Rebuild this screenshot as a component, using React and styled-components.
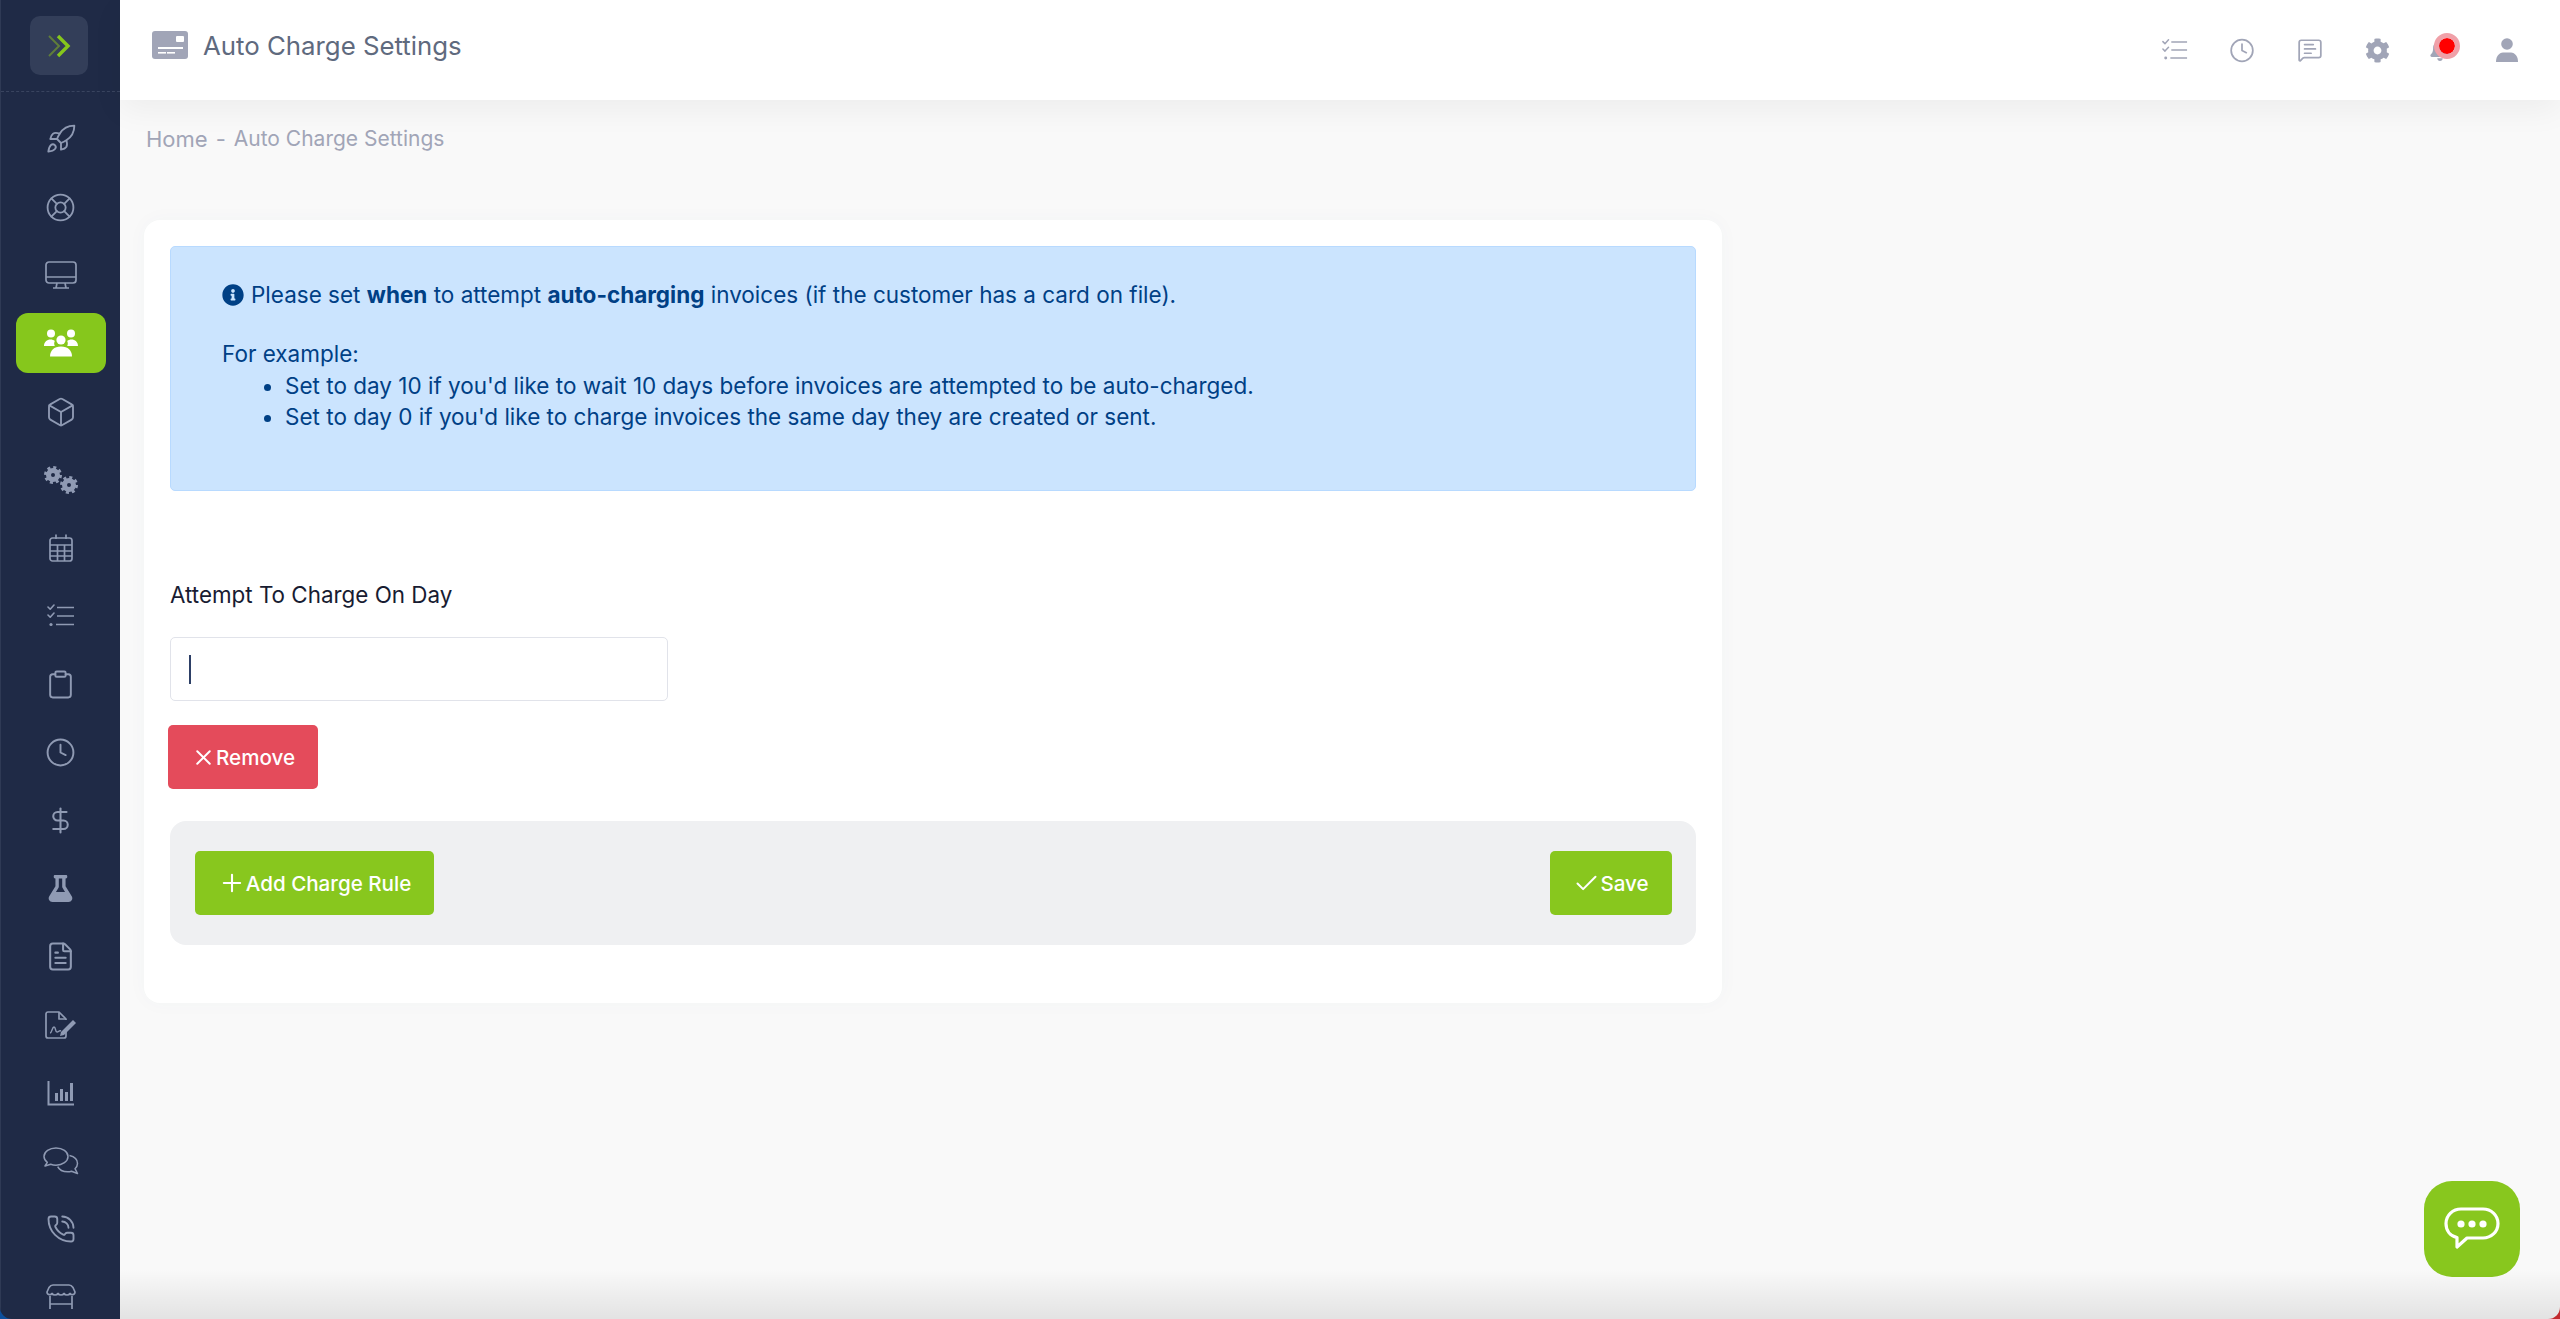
import React from 'react';
import styled, { createGlobalStyle } from 'styled-components';
import {
  Rocket, LifeBuoy, Box, Clipboard, Clock, DollarSign,
  FileText, PhoneCall, MessageSquareText, X, Plus, Check,
} from 'lucide-react';
import { FaFlask, FaCog, FaBell, FaInfoCircle } from 'react-icons/fa';

const GlobalStyle = createGlobalStyle`
  html, body {
    margin: 0;
    padding: 0;
    height: 100%;
    overflow: hidden;
    background: linear-gradient(to right, #0d4f9c 50%, #c22a2e 50%);
  }
  * { box-sizing: border-box; }
  #root { height: 100%; }
`;

const Shell = styled.div`
  display: flex;
  height: 1319px;
  border-radius: 0 0 12px 12px;
  font-family: Inter, "Liberation Sans", sans-serif;
  overflow: hidden;
`;

const Sidebar = styled.aside`
  width: 120px;
  flex-shrink: 0;
  background: #1f2a46;
  border-left: 1px solid #2f3a55;
  display: flex;
  flex-direction: column;
  align-items: center;
  overflow: hidden;
`;

const LogoRow = styled.div`
  width: 100%;
  height: 92px;
  flex-shrink: 0;
  padding: 16px 3px 0 0;
  display: flex;
  justify-content: center;
  border-bottom: 1px dashed #39445f;
`;

const LogoTile = styled.div`
  width: 58px;
  height: 59px;
  border-radius: 10px;
  background: #333e59;
  display: flex;
  align-items: center;
  justify-content: center;
`;

const Nav = styled.nav`
  display: flex;
  flex-direction: column;
  align-items: center;
  padding-top: 17px;
`;

const NavItem = styled.div`
  width: 90px;
  height: 60px;
  margin-bottom: 8.15px;
  border-radius: 12px;
  display: flex;
  align-items: center;
  justify-content: center;
  color: ${({ $active }) => ($active ? '#ffffff' : '#8f9ab3')};
  background: ${({ $active }) => ($active ? '#86c71c' : 'transparent')};
`;

const Main = styled.main`
  flex: 1;
  min-width: 0;
  position: relative;
  background: #f9f9f9;
  display: flex;
  flex-direction: column;
`;

const Header = styled.header`
  height: 100px;
  flex-shrink: 0;
  background: #ffffff;
  box-shadow: 0 10px 30px rgba(0, 0, 0, 0.05);
  padding: 0 40px 0 32px;
  display: flex;
  align-items: center;
  justify-content: space-between;
  position: relative;
`;

const TitleGroup = styled.div`
  display: flex;
  align-items: center;
  gap: 15px;
  margin-bottom: 10px;
`;

const Title = styled.h1`
  margin: 0;
  font-size: 25.8px;
  font-weight: 400;
  color: #5f6a7e;
`;

const HeaderIcons = styled.div`
  display: flex;
  align-items: center;
  gap: 41.5px;
  color: #a1a5b7;
`;

const HeaderIcon = styled.div`
  width: 26px;
  height: 26px;
  display: flex;
  align-items: center;
  justify-content: center;
  position: relative;
`;

const BellIcon = styled(HeaderIcon)`
  margin-left: -5px;
`;

const RedDot = styled.span`
  position: absolute;
  top: -4px;
  left: 7px;
  width: 26px;
  height: 26px;
  border-radius: 50%;
  background: #ff0000;
  border: 5px solid #f0a0a8;
  background-clip: padding-box;
`;

const Breadcrumb = styled.div`
  display: flex;
  gap: 8px;
  padding: 28px 0 0 26px;
  height: 120px;
  flex-shrink: 0;
  align-items: flex-start;
  font-size: 22px;
  color: #a1a5b7;
  line-height: 22px;
`;

const CrumbCurrent = styled.span`
  font-size: 21px;
`;

const Card = styled.section`
  width: 1578px;
  margin-left: 24px;
  background: #ffffff;
  border-radius: 16px;
  box-shadow: 0 0 20px rgba(76, 87, 125, 0.03);
  padding: 26px;
  height: 783px;
`;

const Alert = styled.div`
  height: 245px;
  background: #cbe4fe;
  border: 1px solid #b8daff;
  border-radius: 5px;
  padding: 32px 51px;
  color: #004085;
  font-size: 22.5px;
  line-height: 32px;
`;

const AlertLine = styled.div`
  display: flex;
  align-items: center;
  gap: 7px;
  margin-bottom: 27px;

  b { font-weight: 700; }
`;

const AlertList = styled.ul`
  margin: 0;
  padding-left: 63px;
  line-height: 31px;
`;

const Field = styled.div`
  padding-top: 90px;
`;

const Label = styled.label`
  display: block;
  font-size: 22.4px;
  line-height: 28px;
  color: #181c32;
  margin-bottom: 28px;
`;

const InputBox = styled.div`
  width: 498px;
  height: 64px;
  background: #ffffff;
  border: 1px solid #e1e3ea;
  border-radius: 5px;
  padding: 0 18px;
  display: flex;
  align-items: center;
`;

const Caret = styled.span`
  width: 2px;
  height: 29px;
  background: #2d3f66;
`;

const Button = styled.button`
  height: 64px;
  border: 0;
  padding: 0;
  border-radius: 5px;
  display: inline-flex;
  align-items: center;
  justify-content: center;
  font-family: inherit;
  font-size: 20.6px;
  font-weight: 500;
  color: #ffffff;
  background: ${({ $danger }) => ($danger ? '#e44b5b' : '#88c71e')};
  width: ${({ $width }) => $width}px;
`;

const RemoveButton = styled(Button)`
  display: flex;
  margin: 24px 0 0 -2px;
`;

const ActionBar = styled.div`
  margin-top: 32px;
  height: 124px;
  background: #eff0f2;
  border-radius: 16px;
  padding: 0 24px 0 25px;
  display: flex;
  align-items: center;
  justify-content: space-between;
`;

const ChatFab = styled.div`
  position: absolute;
  right: 40px;
  bottom: 42px;
  width: 96px;
  height: 96px;
  border-radius: 28px;
  background: #88c71e;
  display: flex;
  align-items: center;
  justify-content: center;
`;

const BottomFade = styled.div`
  position: absolute;
  left: 0;
  right: 0;
  bottom: 0;
  height: 50px;
  background: linear-gradient(to bottom, rgba(0, 0, 0, 0), rgba(0, 0, 0, 0.09));
  pointer-events: none;
`;

// hand-drawn icons, the packages don't have these in the same shape
const ChecklistIcon = ({ size = 28 }) => (
  <svg width={size} height={size} viewBox="0 0 28 28" fill="none" stroke="currentColor" strokeWidth="1.6">
    <path d="M1 5l2.2 2.2L7 3M1 13l2.2 2.2L7 11" strokeLinecap="round" strokeLinejoin="round" />
    <path d="M10 5.5h17M10 14h17M9 22.5h18" />
    <circle cx="4" cy="22.5" r="1.6" fill="currentColor" stroke="none" />
  </svg>
);

const GridCalendar = () => (
  <svg width="26" height="30" viewBox="0 0 26 30" fill="none" stroke="currentColor" strokeWidth="1.7">
    <rect x="2" y="5" width="22" height="23" rx="2.5" />
    <path d="M2 12h22M2 18h22M2 23h22M9.500 12v16M16.500 12v16M8 1.500V6M18 1.500V6" />
  </svg>
);

const BarsIcon = () => (
  <svg width="28" height="26" viewBox="0 0 28 26" fill="none">
    <path d="M1.500 1v23.500H27" stroke="currentColor" strokeWidth="2" />
    <rect x="8" y="13" width="3" height="8" fill="currentColor" />
    <rect x="13" y="9" width="3" height="12" fill="currentColor" />
    <rect x="18" y="12" width="3" height="9" fill="currentColor" />
    <rect x="23" y="3" width="3" height="18" fill="currentColor" />
  </svg>
);

const CardIcon = () => (
  <svg width="36" height="28" viewBox="0 0 36 28">
    <rect width="36" height="28" rx="3" fill="#a1a5b7" />
    <rect x="24" y="5" width="8" height="6" rx="1" fill="#fff" />
    <rect x="6" y="16" width="25" height="2" fill="#fff" />
    <rect x="6" y="21" width="8" height="1.600" fill="#fff" />
    <rect x="15" y="21" width="8" height="1.600" fill="#fff" />
  </svg>
);

const MonitorIcon = () => (
  <svg width="32" height="28" viewBox="0 0 32 28" fill="none" stroke="currentColor" strokeWidth="1.7">
    <rect x="1" y="1" width="30" height="21" rx="3" />
    <path d="M1 16h30M12 22l-1 5M20 22l1 5M8 27h16" />
  </svg>
);

const UsersIcon = () => (
  <svg width="36" height="28" viewBox="0 0 36 28" fill="currentColor">
    <circle cx="8" cy="4.500" r="4" />
    <circle cx="28" cy="4.500" r="4" />
    <circle cx="18" cy="11" r="4.600" />
    <path d="M1 17c0-4 3-6.500 6.500-6.500 1.800 0 3.200.5 4.300 1.500-.8 1.500-.8 3.500 0 5H1zM35 17c0-4-3-6.500-6.500-6.500-1.800 0-3.200.5-4.300 1.500.8 1.500.8 3.500 0 5H35z" />
    <path d="M7 27.500c0-6 4-10 11-10s11 4 11 10H7z" />
  </svg>
);

const GearsIcon = () => (
  <svg width="34" height="28" viewBox="0 0 34 28" fill="none" stroke="currentColor">
    <circle cx="9" cy="9" r="4.500" strokeWidth="5" />
    <circle cx="9" cy="9" r="7.500" strokeWidth="3" strokeDasharray="3 2.890" />
    <circle cx="25" cy="19" r="4.500" strokeWidth="5" />
    <circle cx="25" cy="19" r="7.500" strokeWidth="3" strokeDasharray="3 2.890" />
  </svg>
);

const SignedFileIcon = () => (
  <svg width="32" height="28" viewBox="0 0 32 28" fill="none" stroke="currentColor" strokeWidth="1.700" strokeLinejoin="round">
    <path d="M21 17v8a2 2 0 0 1-2 2H3a2 2 0 0 1-2-2V3a2 2 0 0 1 2-2h11l7 7v1" />
    <path d="M14 1v7h7" />
    <path d="M5 22c2 0 2-6 4-6s1 5 3 5 2-2 4-1" strokeWidth="1.400" />
    <path d="M16 21l12-12 3 3-12 12-4 1z" fill="currentColor" stroke="none" />
  </svg>
);

const CommentsIcon = () => (
  <svg width="36" height="28" viewBox="0 0 36 28" fill="none" stroke="currentColor" strokeWidth="1.500" strokeLinejoin="round">
    <path d="M13 1C6.500 1 1 4.800 1 9.500c0 2.300 1.300 4.300 3.300 5.800L2 19l5.700-1.700c1.600.6 3.400.9 5.300.9 6.500 0 12-3.800 12-8.700S19.500 1 13 1z" />
    <path d="M26.500 8.500c4.500 1 8 4 8 8 0 2-1 3.800-2.500 5.200l2.500 4.800-6-2.300c-1.200.4-2.500.6-3.800.6-4.500 0-8.500-2-10-5.200" />
  </svg>
);

const StoreIcon = () => (
  <svg width="30" height="26" viewBox="0 0 30 26" fill="none" stroke="currentColor" strokeWidth="1.700" strokeLinejoin="round">
    <path d="M7 1h16c2 0 3 1 4 2.500l2 4.500c0 3-4 3.500-5 1.500-1 2-5 2-6 0-1 2-5 2-6 0-1 2-5 2-6 0-1 2-5 1.500-5-1.500l2-4.500C4 2 5 1 7 1z" />
    <path d="M4 12v13M26 12v13M4 20h22" />
  </svg>
);

const PersonIcon = () => (
  <svg width="22" height="24" viewBox="0 0 22 24" fill="currentColor">
    <circle cx="11" cy="6" r="5.800" />
    <path d="M0 24c0-6 3-9 7-9.500h8c4 .5 7 3.500 7 9.500H0z" />
  </svg>
);

const navIcons = [
  <Rocket size={32} strokeWidth={1.4} />,
  <LifeBuoy size={31} strokeWidth={1.4} />,
  <MonitorIcon />,
  <UsersIcon />,
  <Box size={32} strokeWidth={1.4} />,
  <GearsIcon />,
  <GridCalendar />,
  <ChecklistIcon />,
  <Clipboard size={31} strokeWidth={1.5} />,
  <Clock size={31} strokeWidth={1.5} />,
  <DollarSign size={29} strokeWidth={1.7} />,
  <FaFlask size={27} />,
  <FileText size={31} strokeWidth={1.6} />,
  <SignedFileIcon />,
  <BarsIcon />,
  <CommentsIcon />,
  <PhoneCall size={30} strokeWidth={1.5} />,
  <StoreIcon />,
];

const App = () => (
  <Shell>
    <GlobalStyle />
    <Sidebar>
      <LogoRow>
        <LogoTile>
          <svg width="24" height="24" viewBox="0 0 24 24" fill="none">
            <path d="M2 2l10 10L2 22" stroke="#5f7d3a" strokeWidth="2" />
            <path d="M11 2l10 10-10 10" stroke="#86c71c" strokeWidth="3.400" />
          </svg>
        </LogoTile>
      </LogoRow>
      <Nav>
        {navIcons.map((icon, index) => (
          <NavItem key={index} $active={index === 3}>{icon}</NavItem>
        ))}
      </Nav>
    </Sidebar>
    <Main>
      <Header>
        <TitleGroup>
          <CardIcon />
          <Title>Auto Charge Settings</Title>
        </TitleGroup>
        <HeaderIcons>
          <HeaderIcon><ChecklistIcon size={26} /></HeaderIcon>
          <HeaderIcon><Clock size={27} strokeWidth={1.6} /></HeaderIcon>
          <HeaderIcon><MessageSquareText size={28} strokeWidth={1.6} /></HeaderIcon>
          <HeaderIcon><FaCog size={25} /></HeaderIcon>
          <BellIcon>
            <FaBell size={22} />
            <RedDot />
          </BellIcon>
          <HeaderIcon><PersonIcon /></HeaderIcon>
        </HeaderIcons>
      </Header>
      <Breadcrumb>
        <span>Home</span>
        <span>-</span>
        <CrumbCurrent>Auto Charge Settings</CrumbCurrent>
      </Breadcrumb>
      <Card>
        <Alert>
          <AlertLine>
            <FaInfoCircle size={22} />
            <span>Please set <b>when</b> to attempt <b>auto-charging</b> invoices (if the customer has a card on file).</span>
          </AlertLine>
          <div>For example:</div>
          <AlertList>
            <li>Set to day 10 if you'd like to wait 10 days before invoices are attempted to be auto-charged.</li>
            <li>Set to day 0 if you'd like to charge invoices the same day they are created or sent.</li>
          </AlertList>
        </Alert>
        <Field>
          <Label>Attempt To Charge On Day</Label>
          <InputBox><Caret /></InputBox>
          <RemoveButton $danger $width={150}><X size={25} strokeWidth={1.9} />Remove</RemoveButton>
        </Field>
        <ActionBar>
          <Button $width={239}><Plus size={28} strokeWidth={1.8} />Add Charge Rule</Button>
          <Button $width={122}><Check size={27} strokeWidth={1.8} />Save</Button>
        </ActionBar>
      </Card>
      <ChatFab>
        <svg width="58" height="46" viewBox="0 0 58 46" fill="none">
          <path d="M18 3h22c8 0 15 6 15 14.500S48 32 40 32H24L14 41v-9.500C7 30 3 24.500 3 17.500 3 9 10 3 18 3z" stroke="#fff" strokeWidth="3.200" strokeLinejoin="round" />
          <circle cx="18" cy="18" r="3.600" fill="#fff" />
          <circle cx="29" cy="18" r="3.600" fill="#fff" />
          <circle cx="40" cy="18" r="3.600" fill="#fff" />
        </svg>
      </ChatFab>
      <BottomFade />
    </Main>
  </Shell>
);

export default App;
